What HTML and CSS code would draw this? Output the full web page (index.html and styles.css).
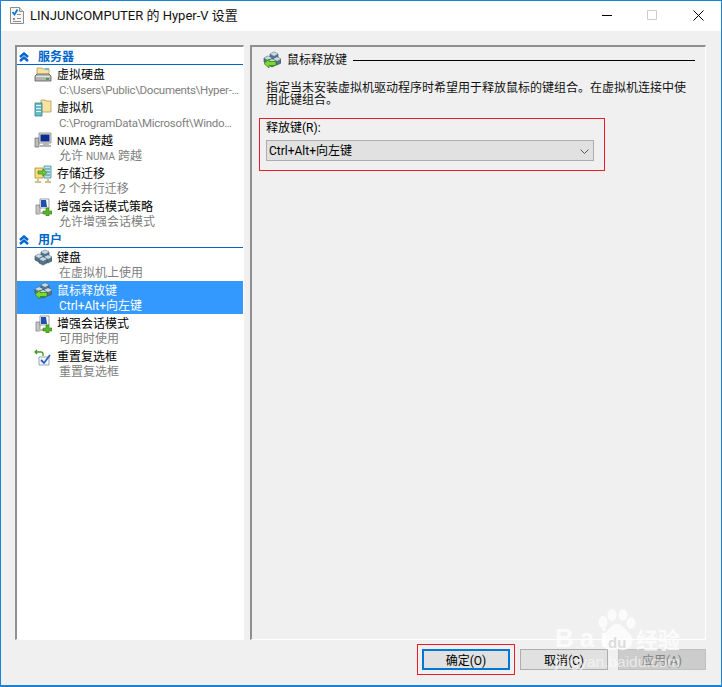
FILE: index.html
```html
<!DOCTYPE html>
<html lang="zh">
<head>
<meta charset="utf-8">
<title>LINJUNCOMPUTER 的 Hyper-V 设置</title>
<link rel="stylesheet" href="styles.css">
</head>
<body>
<svg class="defs" width="0" height="0" aria-hidden="true">
  <defs>
    <g id="i-cube">
      <path d="M0-4l4 2v4l-4 2-4-2v-4z" fill="#55768a" stroke="#34495a" stroke-width=".6"/>
      <path d="M0-4l4 2-4 2-4-2z" fill="#c9d9e3"/>
    </g>
    <g id="i-keys">
      <use href="#i-cube" x="11" y="5"/>
      <use href="#i-cube" x="5" y="9"/>
      <use href="#i-cube" x="14" y="10"/>
      <use href="#i-cube" x="9" y="12"/>
    </g>
    <g id="i-arrow">
      <path d="M1 12.500l5-4.500v2.500h7v4H6V17z" fill="#7fd634" stroke="#2f8a14" stroke-width=".8"/>
    </g>
    <g id="i-session">
      <path d="M2 7h4v9H2z" fill="#c8c8c8" stroke="#777" stroke-width=".7"/>
      <path d="M6 1h9v9H6z" fill="#fff" stroke="#777" stroke-width=".7"/>
      <path d="M7 2l5 0 1 7H7z" fill="#1f4fb0"/>
      <path d="M4 14h9v2H4z" fill="#bbb"/>
      <path d="M12 10h3v3h3v3h-3v2h-3v-2H9v-3h3z" fill="#58b52a" stroke="#2f7d12" stroke-width=".6"/>
    </g>
  </defs>
</svg>
<div class="window">
  <header class="titlebar">
    <svg class="app-icon" width="14" height="17" viewBox="0 0 14 17"><path d="M.5.500h9l4 4v12H.5z" fill="#f6f6f6" stroke="#8c8c8c"/><path d="M9.500.500v4h4" fill="#ddd" stroke="#8c8c8c"/><path d="M2.500 5l2 2.500 3-5" fill="none" stroke="#0a78d2" stroke-width="1.800"/><path d="M3 11h2v2H3zM7 7h4v1H7zM7 11h4v1H7zM3 14h8v1H3z" fill="#8f8f8f"/></svg>
    <span class="title-text">LINJUNCOMPUTER 的 Hyper-V 设置</span>
    <div class="controls">
      <svg width="10" height="10" viewBox="0 0 10 10"><path d="M0 5.500h10" stroke="#000"/></svg>
      <svg width="10" height="10" viewBox="0 0 10 10"><path d="M.5.500h9v9h-9z" fill="none" stroke="#ccc"/></svg>
      <svg class="close" width="11" height="11" viewBox="0 0 11 11"><path d="M.5.500l10 10M10.500.500l-10 10" stroke="#000" fill="none"/></svg>
    </div>
  </header>
  <main class="content">
    <nav class="sidebar">
      <div class="group-head">
        <svg class="chev" width="10" height="10" viewBox="0 0 10 10"><path d="M1 5l4-3.500L9 5M1 9l4-3.500L9 9" fill="none" stroke="#0066cc" stroke-width="2.400"/></svg>
        <span>服务器</span>
      </div>
      <div class="item">
        <svg class="ico" width="18" height="18" viewBox="0 0 18 18"><path d="M3 9V2h5l1 1h6v6z" fill="#f7e3a1" stroke="#b89b52" stroke-width=".8"/><path d="M11 2h4v2h-4z" fill="#7fb2dc"/><path d="M1 10l2-2h12l2 2v5H1z" fill="#b5b5b5" stroke="#5c5c5c" stroke-width=".8"/><path d="M2 10h14v1H2z" fill="#e5e5e5"/><path d="M12 12h3v2h-3z" fill="#49a23a"/></svg>
        <div class="title">虚拟硬盘</div>
        <div class="sub path">C:\Users\Public\Documents\Hyper-…</div>
      </div>
      <div class="item">
        <svg class="ico" width="18" height="18" viewBox="0 0 18 18"><path d="M7 1h4l1 1h5v11H7z" fill="#f7e3a1" stroke="#b89b52" stroke-width=".8"/><path d="M1 4h7v13H1z" fill="#69bcc6" stroke="#2f7f8c" stroke-width=".8"/><path d="M2 6h5v1H2zM2 9h5v1H2zM2 12h5v1H2z" fill="#dff3f5"/></svg>
        <div class="title">虚拟机</div>
        <div class="sub path">C:\ProgramData\Microsoft\Windo…</div>
      </div>
      <div class="item">
        <svg class="ico" width="18" height="18" viewBox="0 0 18 18"><path d="M1 6h4v9H1z" fill="#bdbdbd" stroke="#666" stroke-width=".7"/><path d="M5 1h12v10H5z" fill="#ddd" stroke="#777" stroke-width=".7"/><path d="M6.500 2.500h9v7h-9z" fill="#0c2f8f"/><path d="M9 11h6v2H9zM6 13h11v2H6z" fill="#b5b5b5"/></svg>
        <div class="title"><span class="sm">NUMA</span> 跨越</div>
        <div class="sub">允许 <span class="sm">NUMA</span> 跨越</div>
      </div>
      <div class="item">
        <svg class="ico" width="18" height="18" viewBox="0 0 18 18"><path d="M1 3h8v10H1z" fill="#f5dc86" stroke="#b08a2c" stroke-width=".8"/><path d="M10 1h7v12h-7z" fill="#bfe3e8" stroke="#3e8c99" stroke-width=".8"/><path d="M11 4h5M11 7h5M11 10h5" stroke="#3e8c99"/><path d="M4 6h5V4l4 3.500L9 11V9H4z" fill="#72c63a" stroke="#3b8a18" stroke-width=".7"/><path d="M4 14v2M14 14v2M1 17h6M11 17h6" stroke="#a6801f" fill="none"/></svg>
        <div class="title">存储迁移</div>
        <div class="sub">2 个并行迁移</div>
      </div>
      <div class="item">
        <svg class="ico" width="18" height="18" viewBox="0 0 18 18"><use href="#i-session"/></svg>
        <div class="title">增强会话模式策略</div>
        <div class="sub">允许增强会话模式</div>
      </div>
      <div class="group-head second">
        <svg class="chev" width="10" height="10" viewBox="0 0 10 10"><path d="M1 5l4-3.500L9 5M1 9l4-3.500L9 9" fill="none" stroke="#0066cc" stroke-width="2.400"/></svg>
        <span>用户</span>
      </div>
      <div class="item">
        <svg class="ico" width="18" height="18" viewBox="0 0 18 18"><use href="#i-keys"/></svg>
        <div class="title">键盘</div>
        <div class="sub">在虚拟机上使用</div>
      </div>
      <div class="item selected">
        <svg class="ico" width="18" height="18" viewBox="0 0 18 18"><use href="#i-keys"/><use href="#i-arrow"/></svg>
        <div class="title">鼠标释放键</div>
        <div class="sub">Ctrl+Alt+向左键</div>
      </div>
      <div class="item">
        <svg class="ico" width="18" height="18" viewBox="0 0 18 18"><use href="#i-session"/></svg>
        <div class="title">增强会话模式</div>
        <div class="sub">可用时使用</div>
      </div>
      <div class="item">
        <svg class="ico" width="18" height="18" viewBox="0 0 18 18"><path d="M3 2l-2 2 2 2M1 4h6q2 0 2 2v2" fill="none" stroke="#3f9e1f" stroke-width="1.300"/><path d="M5 9h10v8H5z" fill="#f4f7fb" stroke="#7f8fa6" stroke-width=".8"/><path d="M7 12l3 3 6-8" fill="none" stroke="#2a62c4" stroke-width="1.800"/></svg>
        <div class="title">重置复选框</div>
        <div class="sub">重置复选框</div>
      </div>
    </nav>
    <section class="panel">
      <div class="panel-head">
        <svg width="18" height="18" viewBox="0 0 18 18"><use href="#i-keys"/><use href="#i-arrow"/></svg>
        <span>鼠标释放键</span>
        <i class="rule"></i>
      </div>
      <p class="desc">指定当未安装虚拟机驱动程序时希望用于释放鼠标的键组合。在虚拟机连接中使用此键组合。</p>
      <div class="field marked">
        <label class="field-label">释放键(R):</label>
        <div class="select">
          <span>Ctrl+Alt+向左键</span>
          <svg width="9" height="5" viewBox="0 0 9 5"><path d="M.5.500l4 4 4-4" fill="none" stroke="#555"/></svg>
        </div>
      </div>
    </section>
  </main>
  <footer class="footer">
    <div class="ok-mark"><button class="btn primary">确定(O)</button></div>
    <button class="btn">取消(C)</button>
    <button class="btn disabled">应用(A)</button>
  </footer>
  <div class="watermark">
    <svg width="40" height="42" viewBox="0 0 40 42"><g fill="#fff" fill-opacity=".75"><ellipse cx="6" cy="13" rx="4.500" ry="6"/><ellipse cx="15" cy="6" rx="4.500" ry="6"/><ellipse cx="26" cy="6" rx="4.500" ry="6"/><ellipse cx="34" cy="14" rx="4.500" ry="6"/><path d="M20 15c6 0 8 6 12 9 6 5 4 17-6 17-3 0-4-1-6-1s-3 1-6 1c-10 0-12-12-6-17 4-3 6-9 12-9z"/></g></svg>
    <span class="wm-bai">Bai</span><span class="wm-du">du</span><span class="wm-jy">经验</span>
    <span class="wm-url">jingyan.baidu.com</span>
  </div>
</div>
</body>
</html>
```
FILE: styles.css
```css
* { box-sizing: border-box; }
html, body { margin: 0; padding: 0; }
body {
  width: 722px;
  height: 687px;
  overflow: hidden;
  font: 12px/13px Roboto, "Noto Sans CJK SC", sans-serif;
  color: #000;
}
.defs { position: absolute; }
.window {
  position: relative;
  width: 722px;
  height: 687px;
  display: flex;
  flex-direction: column;
  background: #f0f0f0;
  border: 1px solid #1883d7;
  border-bottom-width: 2px;
}
.titlebar {
  height: 30px;
  flex: none;
  display: flex;
  align-items: center;
  background: #fff;
  padding: 0 0 2px 9px;
}
.app-icon { flex: none; }
.title-text { margin-left: 6px; font-size: 13px; color: #111; }
.controls {
  margin-left: auto;
  display: flex;
  align-items: center;
  gap: 35px;
  padding-right: 17px;
}
.close { margin-left: 1px; }
.content {
  height: 595px;
  flex: none;
  margin-top: 14px;
  padding-left: 14px;
  display: flex;
  gap: 6px;
}
.sidebar {
  width: 229px;
  background: #fff;
  border-style: solid;
  border-color: #909090 #fff #fff #909090;
  border-width: 2px 1px 1px 2px;
  padding-top: 1px;
}
.group-head {
  height: 17px;
  display: flex;
  align-items: center;
  border-bottom: 1px solid #0066cc;
  color: #0066cc;
  font-weight: 700;
  padding: 2px 0 0 2px;
}
.second { margin-top: 1px; }
.chev { flex: none; margin-right: 9px; }
.item {
  position: relative;
  height: 33px;
  padding: 3px 0 0 40px;
  white-space: nowrap;
  overflow: hidden;
}
.ico { position: absolute; left: 17px; top: 1px; }
.title { height: 15px; line-height: 15px; }
.sub { height: 15px; line-height: 15px; padding-left: 2px; color: #808080; }
.path { font-size: 11.500px; letter-spacing: -.3px; }
.sm { font-size: 10px; }
.selected { background: #3399ff; }
.selected .title, .selected .sub { color: #fff; }
.panel {
  width: 456px;
  border-style: solid;
  border-color: #909090 #fff #fff #909090;
  border-width: 2px 1px 1px 2px;
  padding: 4px 8px 0 11px;
}
.panel-head {
  display: flex;
  align-items: center;
  height: 18px;
  gap: 6px;
  color: #111;
}
.panel-head span { padding-top: 1px; }
.rule { flex: 1; height: 1px; background: #000; margin-right: 2px; }
.desc {
  width: 425px;
  margin: 13px 0 0 3px;
  line-height: 12px;
  color: #111;
}
.field {
  position: relative;
  width: 328px;
  margin: 15px 0 0 3px;
  padding-top: 1px;
}
.marked::before {
  content: "";
  position: absolute;
  left: -7px;
  right: -11px;
  top: -3px;
  bottom: -10px;
  border: 1px solid #ed1c24;
  pointer-events: none;
}
.field-label { display: block; height: 13px; line-height: 13px; }
.select {
  margin-top: 5px;
  height: 21px;
  display: flex;
  align-items: center;
  justify-content: space-between;
  padding: 2px 4px 0 2px;
  background: #e1e1e1;
  border: 1px solid #adadad;
}
.footer {
  flex: 1;
  display: flex;
  justify-content: flex-end;
  align-items: flex-start;
  padding: 9px 15px 0 0;
  gap: 10px;
}
.ok-mark { position: relative; }
.ok-mark::before {
  content: "";
  position: absolute;
  left: -5px;
  right: -5px;
  top: -5px;
  bottom: -5px;
  border: 1px solid #ed1c24;
  pointer-events: none;
}
.btn {
  display: block;
  width: 88px;
  height: 21px;
  padding: 3px 0 0;
  font: inherit;
  color: #000;
  background: #e1e1e1;
  border: 1px solid #adadad;
}
.primary { border: 2px solid #0078d7; }
.disabled { background: #ccc; border-color: #bfbfbf; color: #838383; }
.watermark {
  position: absolute;
  left: 540px;
  top: 600px;
  width: 160px;
  height: 76px;
  pointer-events: none;
}
.watermark svg { position: absolute; left: 56px; top: 8px; }
.wm-bai, .wm-du, .wm-jy, .wm-url { position: absolute; white-space: nowrap; }
.wm-bai { left: 14px; top: 23px; font: 700 26px/28px "Liberation Sans", sans-serif; letter-spacing: 6px; color: rgba(255,255,255,.75); }
.wm-du { left: 67px; top: 33px; font: 700 15px/18px "Liberation Sans", sans-serif; color: #dcdcdc; }
.wm-jy { left: 95px; top: 25px; font: 700 22px/24px "Noto Sans CJK SC", sans-serif; color: rgba(255,255,255,.75); }
.wm-url { left: 14px; top: 53px; font: 15.500px/16px "Liberation Sans", sans-serif; color: rgba(255,255,255,.6); }
```
